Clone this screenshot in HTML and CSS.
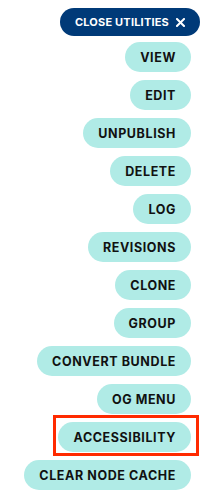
FILE: index.html
```html
<!DOCTYPE html>
<html>
<head>
<meta charset="utf-8">
<link rel="stylesheet" href="styles.css">
</head>
<body>
<div class="utilities">
  <button class="close">CLOSE UTILITIES
    <svg class="x" width="9" height="9" viewBox="0 0 9 9"><path d="M1 1L8 8M8 1L1 8" stroke="#fff" stroke-width="2" stroke-linecap="square"/></svg>
  </button>
  <ul class="list">
    <li><a class="pill">VIEW</a></li>
    <li><a class="pill">EDIT</a></li>
    <li><a class="pill">UNPUBLISH</a></li>
    <li><a class="pill">DELETE</a></li>
    <li><a class="pill">LOG</a></li>
    <li><a class="pill">REVISIONS</a></li>
    <li><a class="pill">CLONE</a></li>
    <li><a class="pill">GROUP</a></li>
    <li><a class="pill">CONVERT BUNDLE</a></li>
    <li><a class="pill">OG MENU</a></li>
    <li><a class="pill highlighted">ACCESSIBILITY</a></li>
    <li><a class="pill">CLEAR NODE CACHE</a></li>
  </ul>
</div>
</body>
</html>
```
FILE: styles.css
```css
html, body {
  margin: 0;
  padding: 0;
  background: #fff;
}
body {
  font-family: Inter, "Liberation Sans", sans-serif;
}
.utilities {
  display: flex;
  flex-direction: column;
  align-items: flex-end;
  padding: 8px 9px 0 0;
}
.close {
  display: flex;
  align-items: center;
  gap: 7px;
  height: 28px;
  padding: 0 15px 0 15px;
  border: 0;
  border-radius: 14px;
  background: #003a78;
  color: #fff;
  font-family: inherit;
  font-size: 11px;
  font-weight: 700;
  letter-spacing: 0.2px;
}
.x {
  display: block;
}
.list {
  list-style: none;
  margin: 6px 9px 0 0;
  padding: 0;
  display: flex;
  flex-direction: column;
  align-items: flex-end;
  gap: 8px;
}
.pill {
  position: relative;
  display: flex;
  align-items: center;
  height: 30px;
  padding: 0 15px;
  border-radius: 15px;
  background: #b0ebe6;
  color: #111;
  font-size: 12.5px;
  font-weight: 700;
  letter-spacing: 0.6px;
}
.highlighted::after {
  content: "";
  position: absolute;
  left: -5px;
  top: -7px;
  right: -8px;
  bottom: -4px;
  border: 3px solid #ff2a00;
}
```
